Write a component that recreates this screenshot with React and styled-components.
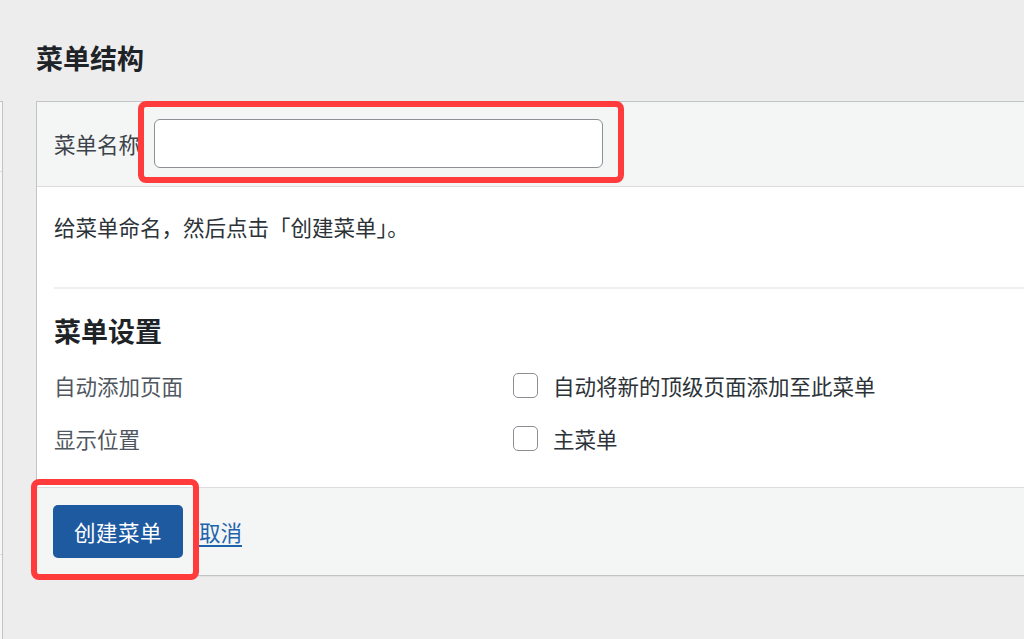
import React from 'react';
import styled, { createGlobalStyle } from 'styled-components';

const colors = {
  page: '#ededed',
  panel: '#f4f5f5',
  white: '#ffffff',
  border: '#c3c4c7',
  divider: '#dcdcde',
  field: '#8c8f94',
  heading: '#1d2327',
  text: '#2c3338',
  label: '#50575e',
  primary: '#1e5a9f',
  link: '#1f64ab',
  mark: '#ff3b3b',
};

const GlobalStyle = createGlobalStyle`
  html, body {
    margin: 0;
    padding: 0;
    background: ${colors.page};
    overflow: hidden;
  }
  body {
    font-family: "Noto Sans CJK SC", "Noto Sans", "Liberation Sans", sans-serif;
    color: ${colors.text};
  }
  * {
    box-sizing: border-box;
  }
`;

const Page = styled.div`
  width: 1024px;
  height: 639px;
  padding-top: 39px;
`;

const Title = styled.h2`
  margin: 0 0 24px 36px;
  font-size: 27px;
  line-height: 38px;
  font-weight: 700;
  color: ${colors.heading};
`;

const Columns = styled.div`
  display: flex;
  gap: 33px;
  align-items: flex-start;
`;

const Sidebar = styled.div`
  flex: none;
  width: 3px;
  height: 540px;
  background: #f6f7f7;
  border-right: 1px solid ${colors.border};
  border-top: 1px solid ${colors.border};
`;

const SidebarItem = styled.div`
  height: ${(p) => p.$h}px;
  border-bottom: 1px solid ${colors.divider};
`;

const Panel = styled.div`
  flex: none;
  width: 1100px;
  border: 1px solid ${colors.border};
  border-right: none;
  background: ${colors.white};
  box-shadow: 0 1px 1px rgba(0, 0, 0, 0.04);
`;

const Header = styled.div`
  position: relative;
  height: 85px;
  display: flex;
  align-items: center;
  gap: 14px;
  padding: 0 0 2px 17px;
  background: ${colors.panel};
  border-bottom: 1px solid ${colors.divider};
`;

const FieldLabel = styled.label`
  font-size: 21.5px;
  color: #3c434a;
`;

const TextInput = styled.input`
  width: 449px;
  height: 49px;
  border: 1.5px solid ${colors.field};
  border-radius: 6px;
  background: ${colors.white};
  outline: none;
  font: inherit;
`;

const Mark = styled.div`
  position: absolute;
  left: ${(p) => p.$left}px;
  top: ${(p) => p.$top}px;
  width: ${(p) => p.$w}px;
  height: ${(p) => p.$h}px;
  border: 6px solid ${colors.mark};
  border-radius: 8px;
  pointer-events: none;
`;

const Body = styled.div`
  padding: 24px 0 29px 17px;
`;

const Hint = styled.p`
  margin: 0;
  font-size: 21.5px;
  line-height: 32px;
  color: ${colors.text};
`;

const Divider = styled.hr`
  margin: 44px 0 0;
  border: none;
  height: 2px;
  background: #f0f0f1;
`;

const SectionTitle = styled.h3`
  margin: 23px 0 15px;
  font-size: 27px;
  line-height: 38px;
  font-weight: 700;
  color: ${colors.heading};
`;

const SettingsList = styled.div`
  display: flex;
  flex-direction: column;
  gap: 13px;
`;

const SettingRow = styled.div`
  display: grid;
  grid-template-columns: 459px auto;
  align-items: center;
  height: 40px;
`;

const SettingLabel = styled.span`
  font-size: 21.5px;
  color: ${colors.label};
`;

const CheckLabel = styled.label`
  display: flex;
  align-items: center;
  gap: 15px;
  font-size: 21.5px;
  color: ${colors.text};
`;

const Checkbox = styled.span`
  width: 25px;
  height: 25px;
  border: 1.5px solid ${colors.field};
  border-radius: 5px;
  background: ${colors.white};
`;

const Footer = styled.div`
  position: relative;
  height: 88px;
  display: flex;
  align-items: center;
  gap: 16px;
  padding-left: 16px;
  background: ${colors.panel};
  border-top: 1px solid ${colors.divider};
`;

const PrimaryButton = styled.button`
  width: 130px;
  height: 53px;
  border: none;
  border-radius: 5px;
  background: ${colors.primary};
  color: ${colors.white};
  font: inherit;
  font-size: 21.5px;
  letter-spacing: 0.5px;
`;

const CancelLink = styled.a`
  font-size: 21.5px;
  color: ${colors.link};
  text-decoration: underline;
  text-underline-offset: 4px;
`;

export default function App() {
  return (
    <Page>
      <GlobalStyle />
      <Title>菜单结构</Title>
      <Columns>
        <Sidebar>
          <SidebarItem $h={70} />
          <SidebarItem $h={383} />
        </Sidebar>
        <Panel>
          <Header>
            <FieldLabel>菜单名称</FieldLabel>
            <TextInput type="text" />
            <Mark $left={101} $top={-1} $w={486} $h={82} />
          </Header>
          <Body>
            <Hint>给菜单命名，然后点击「创建菜单」。</Hint>
            <Divider />
            <SectionTitle>菜单设置</SectionTitle>
            <SettingsList>
              <SettingRow>
                <SettingLabel>自动添加页面</SettingLabel>
                <CheckLabel>
                  <Checkbox />
                  自动将新的顶级页面添加至此菜单
                </CheckLabel>
              </SettingRow>
              <SettingRow>
                <SettingLabel>显示位置</SettingLabel>
                <CheckLabel>
                  <Checkbox />
                  主菜单
                </CheckLabel>
              </SettingRow>
            </SettingsList>
          </Body>
          <Footer>
            <PrimaryButton>创建菜单</PrimaryButton>
            <CancelLink href="#">取消</CancelLink>
            <Mark $left={-6} $top={-9} $w={168} $h={101} />
          </Footer>
        </Panel>
      </Columns>
    </Page>
  );
}
